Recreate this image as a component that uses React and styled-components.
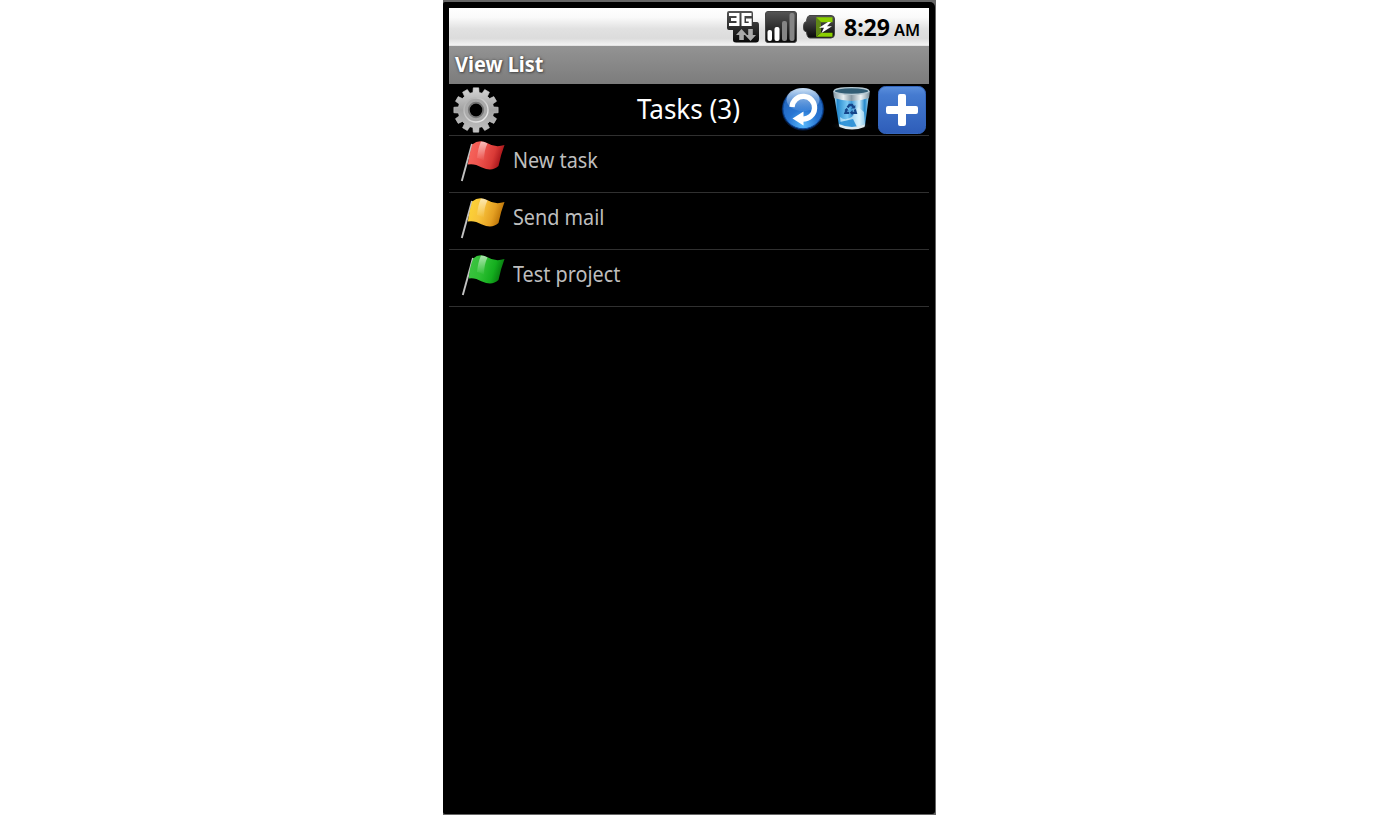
import React from "react";
import styled, { createGlobalStyle } from "styled-components";

const Global = createGlobalStyle`
  body { margin: 0; background: #fff; font-family: "Noto Sans", "Open Sans", sans-serif; }
  * { box-sizing: border-box; }
  svg { display: block; flex: none; }
`;

const Page = styled.main`
  height: 815px;
  display: flex;
  padding-left: 443px;
  overflow: hidden;
`;
const Frame = styled.div`
  width: 493px;
  height: 815px;
  background: #666;
  padding: 2px 1px 1px 0;
`;
const Phone = styled.div`
  height: 100%;
  background: #000;
  border-radius: 2px 5px 3px 2px;
  padding: 6px;
`;
const StatusBar = styled.header`
  height: 38px;
  display: flex;
  align-items: center;
  justify-content: flex-end;
  gap: 6px;
  padding: 0 9px 0 0;
  background: linear-gradient(#fff 0%, #fafafa 25%, #e1e1e1 55%, #dcdcdc 80%, #f1f1f1 96%, #ddd 100%);
`;
const Clock = styled.div`
  display: flex;
  align-items: baseline;
  width: 76px;
  margin-left: 3px;
  padding-top: 2px;
  color: #000;
  line-height: 38px;
`;
const Slot = styled.span`
  display: block;
  width: ${(p) => p.$w}px;
  white-space: nowrap;
`;
const Label = styled.span`
  display: inline-block;
  white-space: nowrap;
  font-size: ${(p) => p.$size}px;
  font-weight: ${(p) => p.$weight || 400};
  transform: scaleX(${(p) => p.$scale || 1});
  transform-origin: ${(p) => p.$origin || "left"} center;
`;
const TitleBar = styled.div`
  height: 38px;
  padding-left: 6px;
  line-height: 36px;
  color: #fff;
  background: linear-gradient(#939393, #7c7c7c);
  text-shadow: 0 0 3px #444, 1px 1px 2px #555;
`;
const Toolbar = styled.div`
  height: 52px;
  display: grid;
  grid-template-columns: 160px 160px 160px;
  border-bottom: 1px solid #303030;
`;
const Heading = styled.h1`
  margin: 0;
  color: #fff;
  text-align: center;
  font-size: 28px;
  font-weight: 400;
  line-height: 49px;
  padding-right: 1px;
`;
const Actions = styled.div`
  display: flex;
  justify-content: flex-end;
  padding: 1px 2px 0 0;
`;
const Row = styled.div`
  height: 57px;
  display: flex;
  border-bottom: 1px solid #303030;
  color: #bebebe;
  line-height: 46px;
  padding-left: 8px;
  gap: 7px;
`;

const Network = () => (
  <svg width="32" height="32" viewBox="0 0 32 32">
    <defs>
      <linearGradient id="dark" x2="0" y2="1"><stop stopColor="#555" /><stop offset="1" stopColor="#080808" /></linearGradient>
    </defs>
    <path d="M2 0H24Q26 0 26 2V11H30Q32 11 32 14V28Q32 31.5 29 31.5H9Q6 31.5 6 29V19H2Q0 19 0 17V2Q0 0 2 0Z" fill="url(#dark)" />
    <path d="M2 3.5H11V13.5H2M4 8.6H11M24.5 3.5H16V13.5H23.2V9H19" fill="none" stroke="#fff" strokeWidth="3" />
    <path d="M14.5 18L20 24H16.8V29H12.2V24H9Z" fill="#aaa" />
    <path d="M23.5 30L18 24H21.2V18H25.8V24H29Z" fill="#aaa" />
  </svg>
);
const Signal = () => (
  <svg width="32" height="32" viewBox="0 0 32 32">
    <rect x=".5" y=".5" width="31" height="31" rx="2.5" fill="url(#dark)" stroke="#444" />
    <rect x="2.5" y="19" width="4.5" height="11" rx="2" fill="#fff" />
    <rect x="9.5" y="16" width="5" height="14" rx="2" fill="#fff" />
    <rect x="17" y="10" width="5" height="20" rx="2" fill="#858585" />
    <rect x="24.5" y="2" width="5" height="28" rx="2" fill="#858585" />
  </svg>
);
const Battery = () => (
  <svg width="32" height="32" viewBox="0 0 32 32">
    <path d="M7 4.5H28Q31.5 4.5 31.5 8V23Q31.5 27 28 27H7Q4 27 3.5 21L1.5 20Q.5 19 .5 16T1.5 11.5L3.5 10.5Q4 4.5 7 4.5Z" fill="url(#dark)" stroke="#444" />
    <path d="M13 6.3H29.5V11.2H18ZM18 21.8H29.5V25.8H13Z" fill="#8bd000" />
    <path d="M13 6.3L18 11.2V21.8L13 25.8Z" fill="#5f8616" />
    <path d="M25 11L16 16.8H21L18.5 22L29 15.3H24L28 11Z" fill="#fff" />
  </svg>
);

const gearPath = (() => {
  const pts = [];
  for (let i = 0; i < 12; i += 1) {
    [[-10, 17.8], [-7, 22.3], [7, 22.3], [10, 17.8]].forEach(([a, r]) => {
      const t = ((i * 30 + a - 90) * Math.PI) / 180;
      pts.push(`${(27 + r * Math.cos(t)).toFixed(2)} ${(26 + r * Math.sin(t)).toFixed(2)}`);
    });
  }
  return `M${pts.join("L")}Z`;
})();
const Gear = () => (
  <svg width="54" height="51" viewBox="0 0 54 51">
    <defs>
      <linearGradient id="gear" x2="0" y2="1"><stop stopColor="#d4d4d4" /><stop offset=".5" stopColor="#a3a3a3" /><stop offset="1" stopColor="#c0c0c0" /></linearGradient>
      <linearGradient id="ring" x2="1" y2="1"><stop stopColor="#aaa" /><stop offset="1" stopColor="#f1f1f1" /></linearGradient>
    </defs>
    <path d={gearPath} fill="url(#gear)" stroke="#d0d0d0" strokeWidth=".6" strokeLinejoin="round" />
    <circle cx="27" cy="26" r="12" fill="#a8a8a8" stroke="url(#ring)" strokeWidth="1.4" />
    <circle cx="27" cy="26" r="7.3" fill="none" stroke="#777" strokeWidth="1.7" />
    <circle cx="27" cy="26" r="6.4" fill="#000" />
  </svg>
);
const Refresh = () => (
  <svg width="49" height="48" viewBox="0 0 49 48">
    <defs>
      <radialGradient id="orb" cx=".5" cy=".9" r=".85"><stop stopColor="#58b8fc" /><stop offset=".45" stopColor="#2875d2" /><stop offset="1" stopColor="#2162b8" /></radialGradient>
      <linearGradient id="shine" x2="0" y2="1"><stop stopColor="#e4f3ff" stopOpacity=".9" /><stop offset="1" stopColor="#7caeea" stopOpacity=".2" /></linearGradient>
    </defs>
    <circle cx="24" cy="24.3" r="21.3" fill="#082a63" opacity=".7" />
    <circle cx="24" cy="23.8" r="20" fill="url(#orb)" stroke="#0c4a9c" />
    <ellipse cx="24" cy="14.5" rx="16.5" ry="11.5" fill="url(#shine)" />
    <path d="M13 22A11.3 11.3 0 1 1 23.5 34" fill="none" stroke="#fff" strokeWidth="5.3" />
    <path d="M13.5 33.5L24.5 26.5V40.5Z" fill="#fff" />
  </svg>
);
const Trash = () => (
  <svg width="49" height="48" viewBox="0 -1 49 48">
    <defs>
      <linearGradient id="bin" x2="1"><stop stopColor="#c9eefc" /><stop offset=".1" stopColor="#278bcf" /><stop offset=".38" stopColor="#79c9f4" /><stop offset=".5" stopColor="#3f9bd9" /><stop offset=".72" stopColor="#d5f1fc" /><stop offset=".88" stopColor="#2288cb" /><stop offset="1" stopColor="#b7e0f2" /></linearGradient>
      <linearGradient id="rim" x2="1"><stop stopColor="#8297a4" /><stop offset=".28" stopColor="#e5edf0" /><stop offset=".5" stopColor="#899aa5" /><stop offset=".75" stopColor="#edf3f5" /><stop offset="1" stopColor="#798e9b" /></linearGradient>
      <radialGradient id="shade"><stop stopColor="#555" stopOpacity=".8" /><stop offset="1" stopColor="#000" stopOpacity="0" /></radialGradient>
    </defs>
    <ellipse cx="24" cy="40" rx="23" ry="5" fill="url(#shade)" />
    <path d="M6 8L11 40Q24 46 37 40L41 8Z" fill="url(#bin)" />
    <path d="M12 31Q18 36 25 30L30 21L36 26L37 38Q25 44 13 39Z" fill="#d9f4ff" opacity=".65" />
    <path d="M12 36L25 33L29 41Q19 43 12 39Z" fill="#1683d0" opacity=".8" />
    <path d="M5 5Q23 0 42 5L41 12Q24 18 6 12Z" fill="url(#rim)" />
    <ellipse cx="23.5" cy="5" rx="17.3" ry="3.4" fill="#315d75" stroke="#b5c8d2" strokeWidth="1.2" />
    <path d="M11 38Q24 44 37 38L36.5 41Q24 46 11.5 41Z" fill="#dce9ee" />
    <g fill="none" stroke="#15458a" strokeWidth="2.3">
      <path d="M19.5 21.5L21.5 19H24L25.4 21.2" />
      <path d="M26.8 23.4L27.8 26.8H24" />
      <path d="M21.2 26.8H17.5L18.6 24" />
    </g>
    <path d="M23 22.5H27.3V19ZM24.6 24V29.3L21.8 26.7ZM16.3 24.3L18.8 21.7L20.7 24.8Z" fill="#15458a" />
  </svg>
);
const Add = () => (
  <svg width="50" height="50" viewBox="0 0 50 50">
    <defs><linearGradient id="add" x2="0" y2="1"><stop stopColor="#5b8fdc" /><stop offset=".18" stopColor="#457bd0" /><stop offset="1" stopColor="#2e5db9" /></linearGradient></defs>
    <rect x="1.5" y="1.5" width="47" height="47" rx="7" fill="url(#add)" stroke="#3466bd" />
    <path d="M23 9H27Q29 9 29 11V21H39Q41 21 41 23V27Q41 29 39 29H29V39Q29 41 27 41H23Q21 41 21 39V29H11Q9 29 9 27V23Q9 21 11 21H21V11Q21 9 23 9Z" fill="#fff" />
  </svg>
);
const Flag = ({ id, colors, shift = 0 }) => (
  <svg width="49" height="56" viewBox="0 0 49 56">
    <defs>
      <linearGradient id={id} x2="1" y2=".25"><stop stopColor={colors[0]} /><stop offset=".45" stopColor={colors[1]} /><stop offset=".78" stopColor={colors[2]} /><stop offset="1" stopColor={colors[3]} /></linearGradient>
      <linearGradient id={`${id}Glow`} x2="0" y2="1"><stop stopColor="#fff" stopOpacity=".6" /><stop offset="1" stopColor="#fff" stopOpacity="0" /></linearGradient>
    </defs>
    <path d={`M${15 + shift} 8L${4.8 + shift} 45`} stroke="#c2c2c2" strokeWidth="1.9" />
    <path d={`M${15.2 + shift} 8.5Q22 3 30 7Q38 12 47.5 9Q44 18 41.5 30Q35 36 25 31.5Q17 27 ${10.8 + shift} 28.5Q12.5 17 ${15.2 + shift} 8.5Z`} fill={`url(#${id})`} />
    <path d="M24 5.5Q28 5.5 30.5 7.5Q27 14 27 25Q23 22 20 22Q21 12 24 5.5Z" fill={`url(#${id}Glow)`} />
  </svg>
);

const tasks = [
  { name: "New task", id: "red", colors: ["#fa6a60", "#ee544e", "#d93a36", "#a8151a"] },
  { name: "Send mail", id: "yellow", colors: ["#ffd934", "#f7c23a", "#e5a022", "#bd7508"] },
  { name: "Test project", id: "green", shift: 1, colors: ["#3fc344", "#2fc034", "#14ae1e", "#087d10"] },
];

export default function App() {
  return (
    <Page>
      <Global />
      <Frame>
        <Phone>
          <StatusBar>
            <Network />
            <Signal />
            <Battery />
            <Clock>
              <Slot $w={50}><Label $size={23} $weight={700} $scale={1}>8:29</Label></Slot>
              <Slot $w={26}><Label $size={16} $weight={600} $scale={1.02}>AM</Label></Slot>
            </Clock>
          </StatusBar>
          <TitleBar><Label $size={21} $weight={700} $scale={0.95}>View List</Label></TitleBar>
          <Toolbar>
            <Gear />
            <Heading><Label $size={28} $scale={0.93} $origin="center">Tasks (3)</Label></Heading>
            <Actions><Refresh /><Trash /><Add /></Actions>
          </Toolbar>
          {tasks.map((t) => (
            <Row key={t.id}>
              <Flag id={t.id} colors={t.colors} shift={t.shift} />
              <Label $size={22} $scale={0.9}>{t.name}</Label>
            </Row>
          ))}
        </Phone>
      </Frame>
    </Page>
  );
}
